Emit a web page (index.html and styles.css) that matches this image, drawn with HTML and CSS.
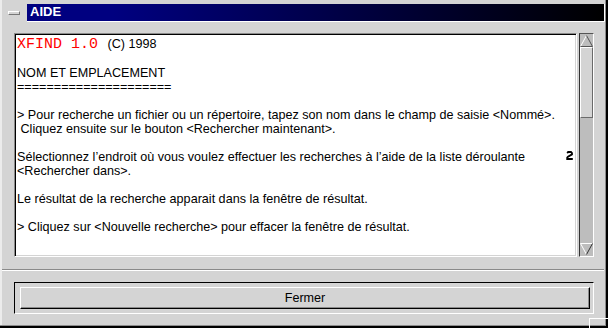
FILE: index.html
```html
<!DOCTYPE html>
<html lang="fr">
<head>
<meta charset="utf-8">
<title>AIDE</title>
<link rel="stylesheet" href="styles.css">
</head>
<body>
<div class="window">
  <div class="titlerow">
    <div class="menubtn"></div>
    <div class="titlebar">AIDE</div>
  </div>
  <div class="main">
    <div class="text"><span class="red">XFIND 1.0</span> (C) 1998

NOM ET EMPLACEMENT
=====================

&gt; Pour recherche un fichier ou un répertoire, tapez son nom dans le champ de saisie &lt;Nommé&gt;.
 Cliquez ensuite sur le bouton &lt;Rechercher maintenant&gt;.

Sélectionnez l’endroit où vous voulez effectuer les recherches à l’aide de la liste déroulante
&lt;Rechercher dans&gt;.

Le résultat de la recherche apparait dans la fenêtre de résultat.

&gt; Cliquez sur &lt;Nouvelle recherche&gt; pour effacer la fenêtre de résultat.</div>
    <div class="scroll">
      <div class="arrow">
        <svg width="13" height="12" viewBox="0 0 13 12"><path d="M0.5 11.5 L6.5 0.5" stroke="#fff" fill="none"/><path d="M6.5 0.5 L12.5 11.5 L0.5 11.5" stroke="#555" fill="none"/></svg>
      </div>
      <div class="thumb"></div>
      <div class="trough"></div>
      <div class="arrow">
        <svg width="13" height="12" viewBox="0 0 13 12"><path d="M0.5 0.5 L12.5 0.5 M0.5 0.5 L6.5 11.5" stroke="#fff" fill="none"/><path d="M6.5 11.5 L12.5 0.5" stroke="#333" fill="none"/></svg>
      </div>
    </div>
  </div>
  <div class="sep"></div>
  <div class="btnframe"><div class="btn">Fermer</div></div>
  <svg class="cursor" width="7" height="9" viewBox="0 0 7 9"><path d="M1.2 2.2 L2.2 1 L5 1 L6 2 L6 3.4 L2 5.6 L1.2 6.6 L1.2 8 L6.8 8" stroke="#000" stroke-width="1.8" fill="none"/></svg>
  <div class="grip"></div>
</div>
</body>
</html>
```
FILE: styles.css
```css
body {
  margin: 0;
  background: #d4d4d4;
}
.window {
  position: relative;
  width: 608px;
  height: 328px;
  box-sizing: border-box;
  background: #d4d4d4;
  box-shadow: inset -2px -2px 0 #000, inset -3px -3px 0 #8c8c8c, inset 2px 0 0 #ececec;
  display: flex;
  flex-direction: column;
  font-family: "Liberation Sans", Arial, sans-serif;
  font-size: 12.6px;
  color: #000;
}
.titlerow {
  display: flex;
  height: 22px;
  box-sizing: border-box;
  padding: 4px 3px 0 8px;
}
.menubtn {
  width: 12px;
  height: 4px;
  box-sizing: border-box;
  margin-top: 7px;
  margin-right: 7px;
  background: #d4d4d4;
  border: 1px solid;
  border-color: #fff #777 #777 #fff;
}
.titlebar {
  flex: 1;
  height: 18px;
  box-sizing: border-box;
  background: linear-gradient(90deg, #000080 15%, #000 100%);
  border-right: 1px solid #fff;
  border-bottom: 1px solid #fff;
  color: #fff;
  font-weight: bold;
  font-size: 13px;
  line-height: 16px;
  padding-left: 3px;
}
.main {
  display: flex;
  margin: 11px 0 0 14px;
  height: 224px;
}
.text {
  width: 563px;
  box-sizing: border-box;
  background: #fff;
  border: 1px solid;
  border-color: #8a8a8a #fff #fff #8a8a8a;
  box-shadow: inset 1px 1px 0 #000, inset -1px -1px 0 #d4d4d4;
  padding: 3px 0 0 2px;
  white-space: pre;
  line-height: 14px;
  overflow: hidden;
}
.red {
  font-family: "Liberation Mono", "Courier New", monospace;
  font-size: 15px;
  line-height: 14px;
  color: #ff0000;
  margin-right: 6px;
}
.scroll {
  margin-left: 2px;
  width: 15px;
  box-sizing: border-box;
  border: 1px solid;
  border-color: #555 #fff #fff #333;
  background: #bdbdbd;
  display: flex;
  flex-direction: column;
}
.arrow {
  height: 13px;
  display: flex;
  align-items: flex-end;
  justify-content: center;
}
.arrow:last-child {
  align-items: flex-start;
}
.thumb {
  height: 71px;
  box-sizing: border-box;
  background: #d4d4d4;
  border: 1px solid;
  border-color: #fff #6a6a6a #6a6a6a #fff;
}
.trough {
  flex: 1;
}
.sep {
  height: 0;
  border-top: 1px solid #8a8a8a;
  border-bottom: 1px solid #fff;
  margin: 12px 4px 0 2px;
}
.btnframe {
  margin: 11px 0 0 14px;
  width: 580px;
  height: 32px;
  box-sizing: border-box;
  border: 1px solid;
  border-color: #000 #fff #fff #000;
  padding: 4px 0 0 5px;
}
.btn {
  width: 570px;
  height: 22px;
  box-sizing: border-box;
  border: 1px solid;
  border-color: #fff #000 #000 #fff;
  box-shadow: inset -1px -1px 0 #8a8a8a;
  background: #d4d4d4;
  display: flex;
  align-items: center;
  justify-content: center;
}
.cursor {
  position: absolute;
  left: 566px;
  top: 151px;
}
.grip {
  position: absolute;
  left: 589px;
  top: 318px;
  width: 19px;
  height: 10px;
  box-sizing: border-box;
  border-left: 1px solid #fff;
  border-top: 1px solid #fff;
}
```
